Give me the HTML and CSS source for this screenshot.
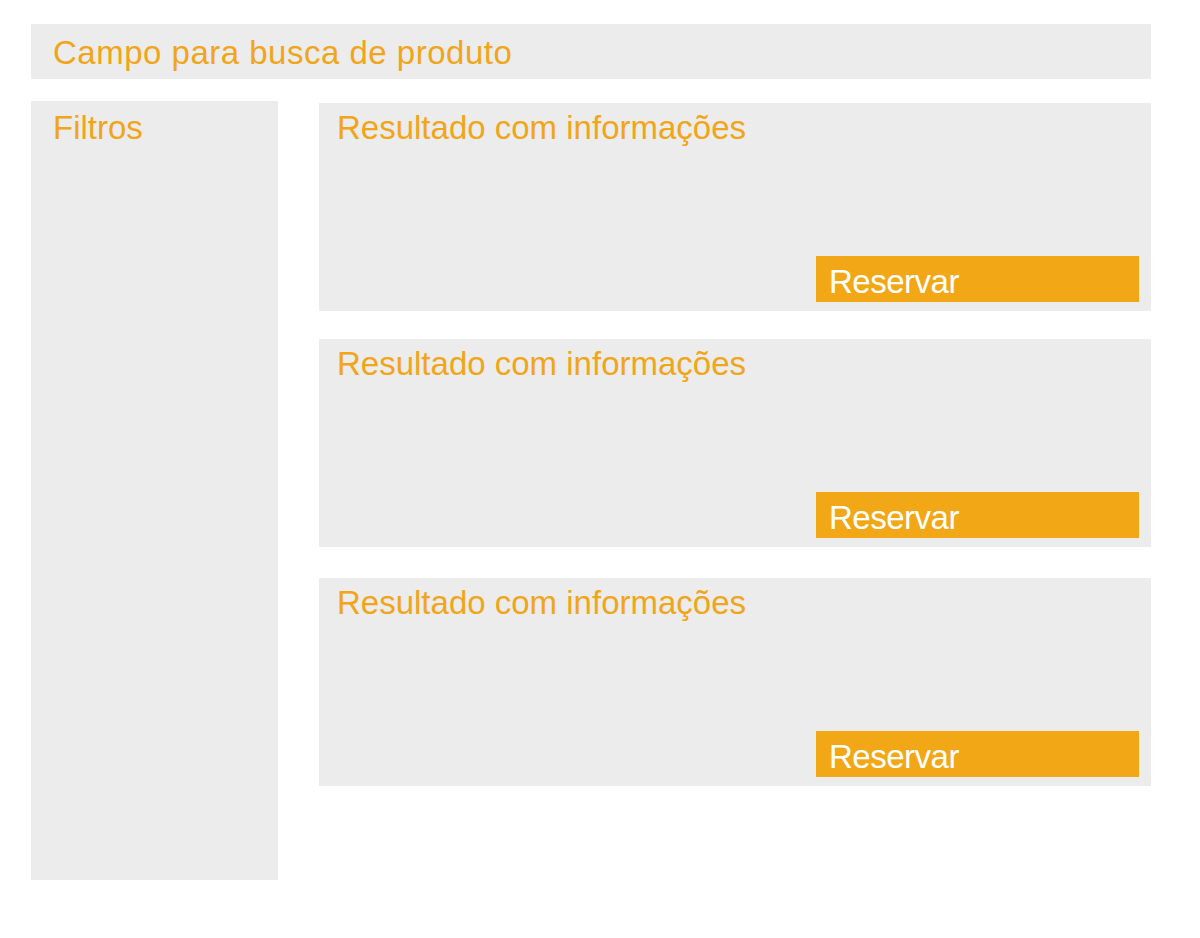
FILE: index.html
```html
<!DOCTYPE html>
<html lang="pt">
<head>
<meta charset="utf-8">
<title>Busca de produto</title>
<link rel="stylesheet" href="styles.css">
</head>
<body>
<div class="page">
  <div class="search">Campo para busca de produto</div>
  <div class="main">
    <aside class="filters">Filtros</aside>
    <section class="results">
      <div class="card">
        <div class="card-title">Resultado com informações</div>
        <div class="btn">Reservar</div>
      </div>
      <div class="card">
        <div class="card-title">Resultado com informações</div>
        <div class="btn">Reservar</div>
      </div>
      <div class="card card--spaced">
        <div class="card-title">Resultado com informações</div>
        <div class="btn">Reservar</div>
      </div>
    </section>
  </div>
</div>
</body>
</html>
```

FILE: styles.css
```css
html, body {
  margin: 0;
  padding: 0;
  background: #ffffff;
}

body {
  font-family: "Liberation Sans", Arial, sans-serif;
  font-size: 33px;
  line-height: 33px;
  color: #F1A519;
}

.page {
  padding: 24px 49px 0 31px;
}

.search {
  box-sizing: border-box;
  height: 55px;
  padding: 12px 22px 0;
  background: #ECECEC;
  letter-spacing: 0.5px;
}

.main {
  display: flex;
  gap: 41px;
  margin-top: 22px;
  align-items: flex-start;
}

.filters {
  box-sizing: border-box;
  width: 247px;
  height: 779px;
  padding: 10px 22px 0;
  background: #ECECEC;
}

.results {
  flex: 1;
  display: flex;
  flex-direction: column;
  gap: 28px;
  padding-top: 2px;
}

.card {
  box-sizing: border-box;
  height: 208px;
  padding: 8px 12px 9px 18px;
  background: #ECECEC;
  display: flex;
  flex-direction: column;
  justify-content: space-between;
}

.card--spaced {
  margin-top: 3px;
}

.btn {
  box-sizing: border-box;
  align-self: flex-end;
  width: 323px;
  height: 46px;
  padding: 9px 13px 0;
  background: #F2A716;
  color: #ffffff;
  letter-spacing: -0.5px;
}
```
